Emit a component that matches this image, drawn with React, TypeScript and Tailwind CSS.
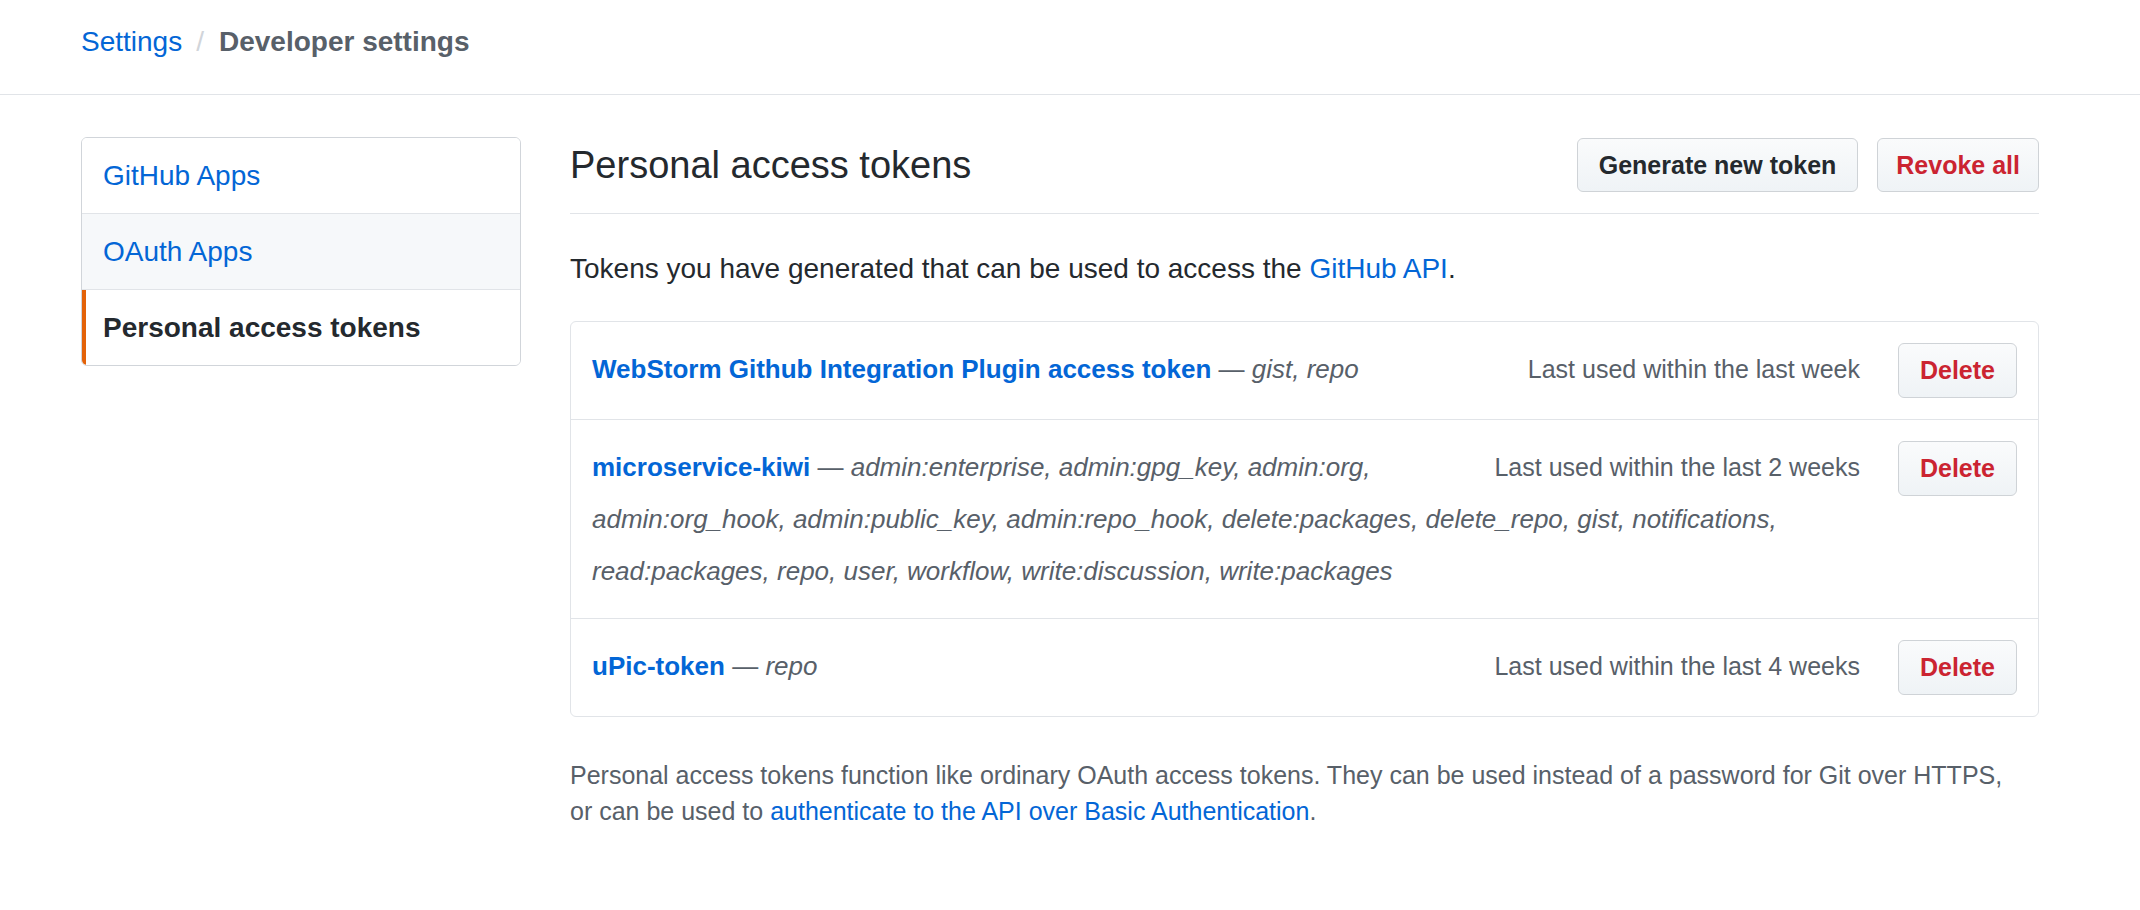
import { useState } from "react";

type Token = {
	name: string;
	scopes: string;
	lastUsed: string;
};

const tokens: Token[] = [
	{
		name: "WebStorm Github Integration Plugin access token",
		scopes: "gist, repo",
		lastUsed: "Last used within the last week",
	},
	{
		name: "microservice-kiwi",
		scopes:
			"admin:enterprise, admin:gpg_key, admin:org, admin:org_hook, admin:public_key, admin:repo_hook, delete:packages, delete_repo, gist, notifications, read:packages, repo, user, workflow, write:discussion, write:packages",
		lastUsed: "Last used within the last 2 weeks",
	},
	{
		name: "uPic-token",
		scopes: "repo",
		lastUsed: "Last used within the last 4 weeks",
	},
];

const menu = ["GitHub Apps", "OAuth Apps", "Personal access tokens"];

const btn =
	"rounded-[6px] border border-[#cfd3d7] bg-linear-to-b from-[#fafbfc] to-[#eff3f6] font-bold leading-none whitespace-nowrap";

const TokenRow = ({ name, scopes, lastUsed }: Token) => (
	<li className="flow-root border-t border-[#e1e4e8] px-[21px] py-[21px] text-[26px] leading-[52px] first:border-t-0">
		<button className={`${btn} float-right h-[55px] px-[21px] text-[25px] text-[#cb2431]`}>
			Delete
		</button>
		<span className="float-right mr-[38px] text-[25px] text-[#586069]">{lastUsed}</span>
		<a href="#" className="font-bold text-[#0366d6]">
			{name}
		</a>
		<span className="text-[#586069]">
			{" — "}
			<em>{scopes}</em>
		</span>
	</li>
);

export default function App() {
	const [active] = useState(2);

	return (
		<div className="min-h-screen bg-white font-['Liberation_Sans',Arial,sans-serif] text-[#24292e]">
			<header className="h-[95px] border-b border-[#e1e4e8] pl-[81px] pt-[24px] text-[28px] leading-[36px]">
				<a href="#" className="text-[#0366d6]">
					Settings
				</a>
				<span className="ml-[14px] mr-[15px] text-[#d1d5da]">/</span>
				<span className="font-bold text-[#586069]">Developer settings</span>
			</header>

			<div className="flex items-start gap-[49px] pl-[81px] pt-[42px]">
				<nav className="w-[440px] shrink-0 overflow-hidden rounded-[6px] border border-[#d1d5da]">
					{menu.map((item, i) => (
						<a
							key={item}
							href="#"
							className={`relative flex h-[76px] items-center border-[#e1e4e8] px-[21px] text-[28px] last:h-[75px] ${
								i < menu.length - 1 ? "border-b" : ""
							} ${i === 1 ? "bg-[#f6f8fa]" : "bg-white"} ${
								i === active ? "font-bold text-[#24292e]" : "text-[#0366d6]"
							}`}
						>
							{i === active && (
								<span className="absolute inset-y-0 left-0 w-[4px] bg-[#e36209]" />
							)}
							{item}
						</a>
					))}
				</nav>

				<main className="w-[1469px]">
					<div className="flex items-center justify-between border-b border-[#e1e4e8] pb-[21px] pt-[1px]">
						<h2 className="text-[38px] font-normal leading-[54px]">Personal access tokens</h2>
						<div className="flex gap-[19px]">
							<button className={`${btn} h-[54px] px-[21px] text-[25px] text-[#24292e]`}>
								Generate new token
							</button>
							<button className={`${btn} h-[54px] px-[18px] text-[25px] text-[#cb2431]`}>
								Revoke all
							</button>
						</div>
					</div>

					<p className="mb-[31px] mt-[34px] text-[28px] leading-[42px]">
						Tokens you have generated that can be used to access the{" "}
						<a href="#" className="text-[#0366d6]">
							GitHub API
						</a>
						.
					</p>

					<ul className="rounded-[6px] border border-[#e1e4e8]">
						{tokens.map((t) => (
							<TokenRow key={t.name} {...t} />
						))}
					</ul>

					<p className="mt-[40px] text-[25px] leading-[36px] text-[#586069]">
						Personal access tokens function like ordinary OAuth access tokens. They can be used
						instead of a password for Git over HTTPS,
						<br />
						or can be used to{" "}
						<a href="#" className="text-[#0366d6]">
							authenticate to the API over Basic Authentication
						</a>
						.
					</p>
				</main>
			</div>
		</div>
	);
}
